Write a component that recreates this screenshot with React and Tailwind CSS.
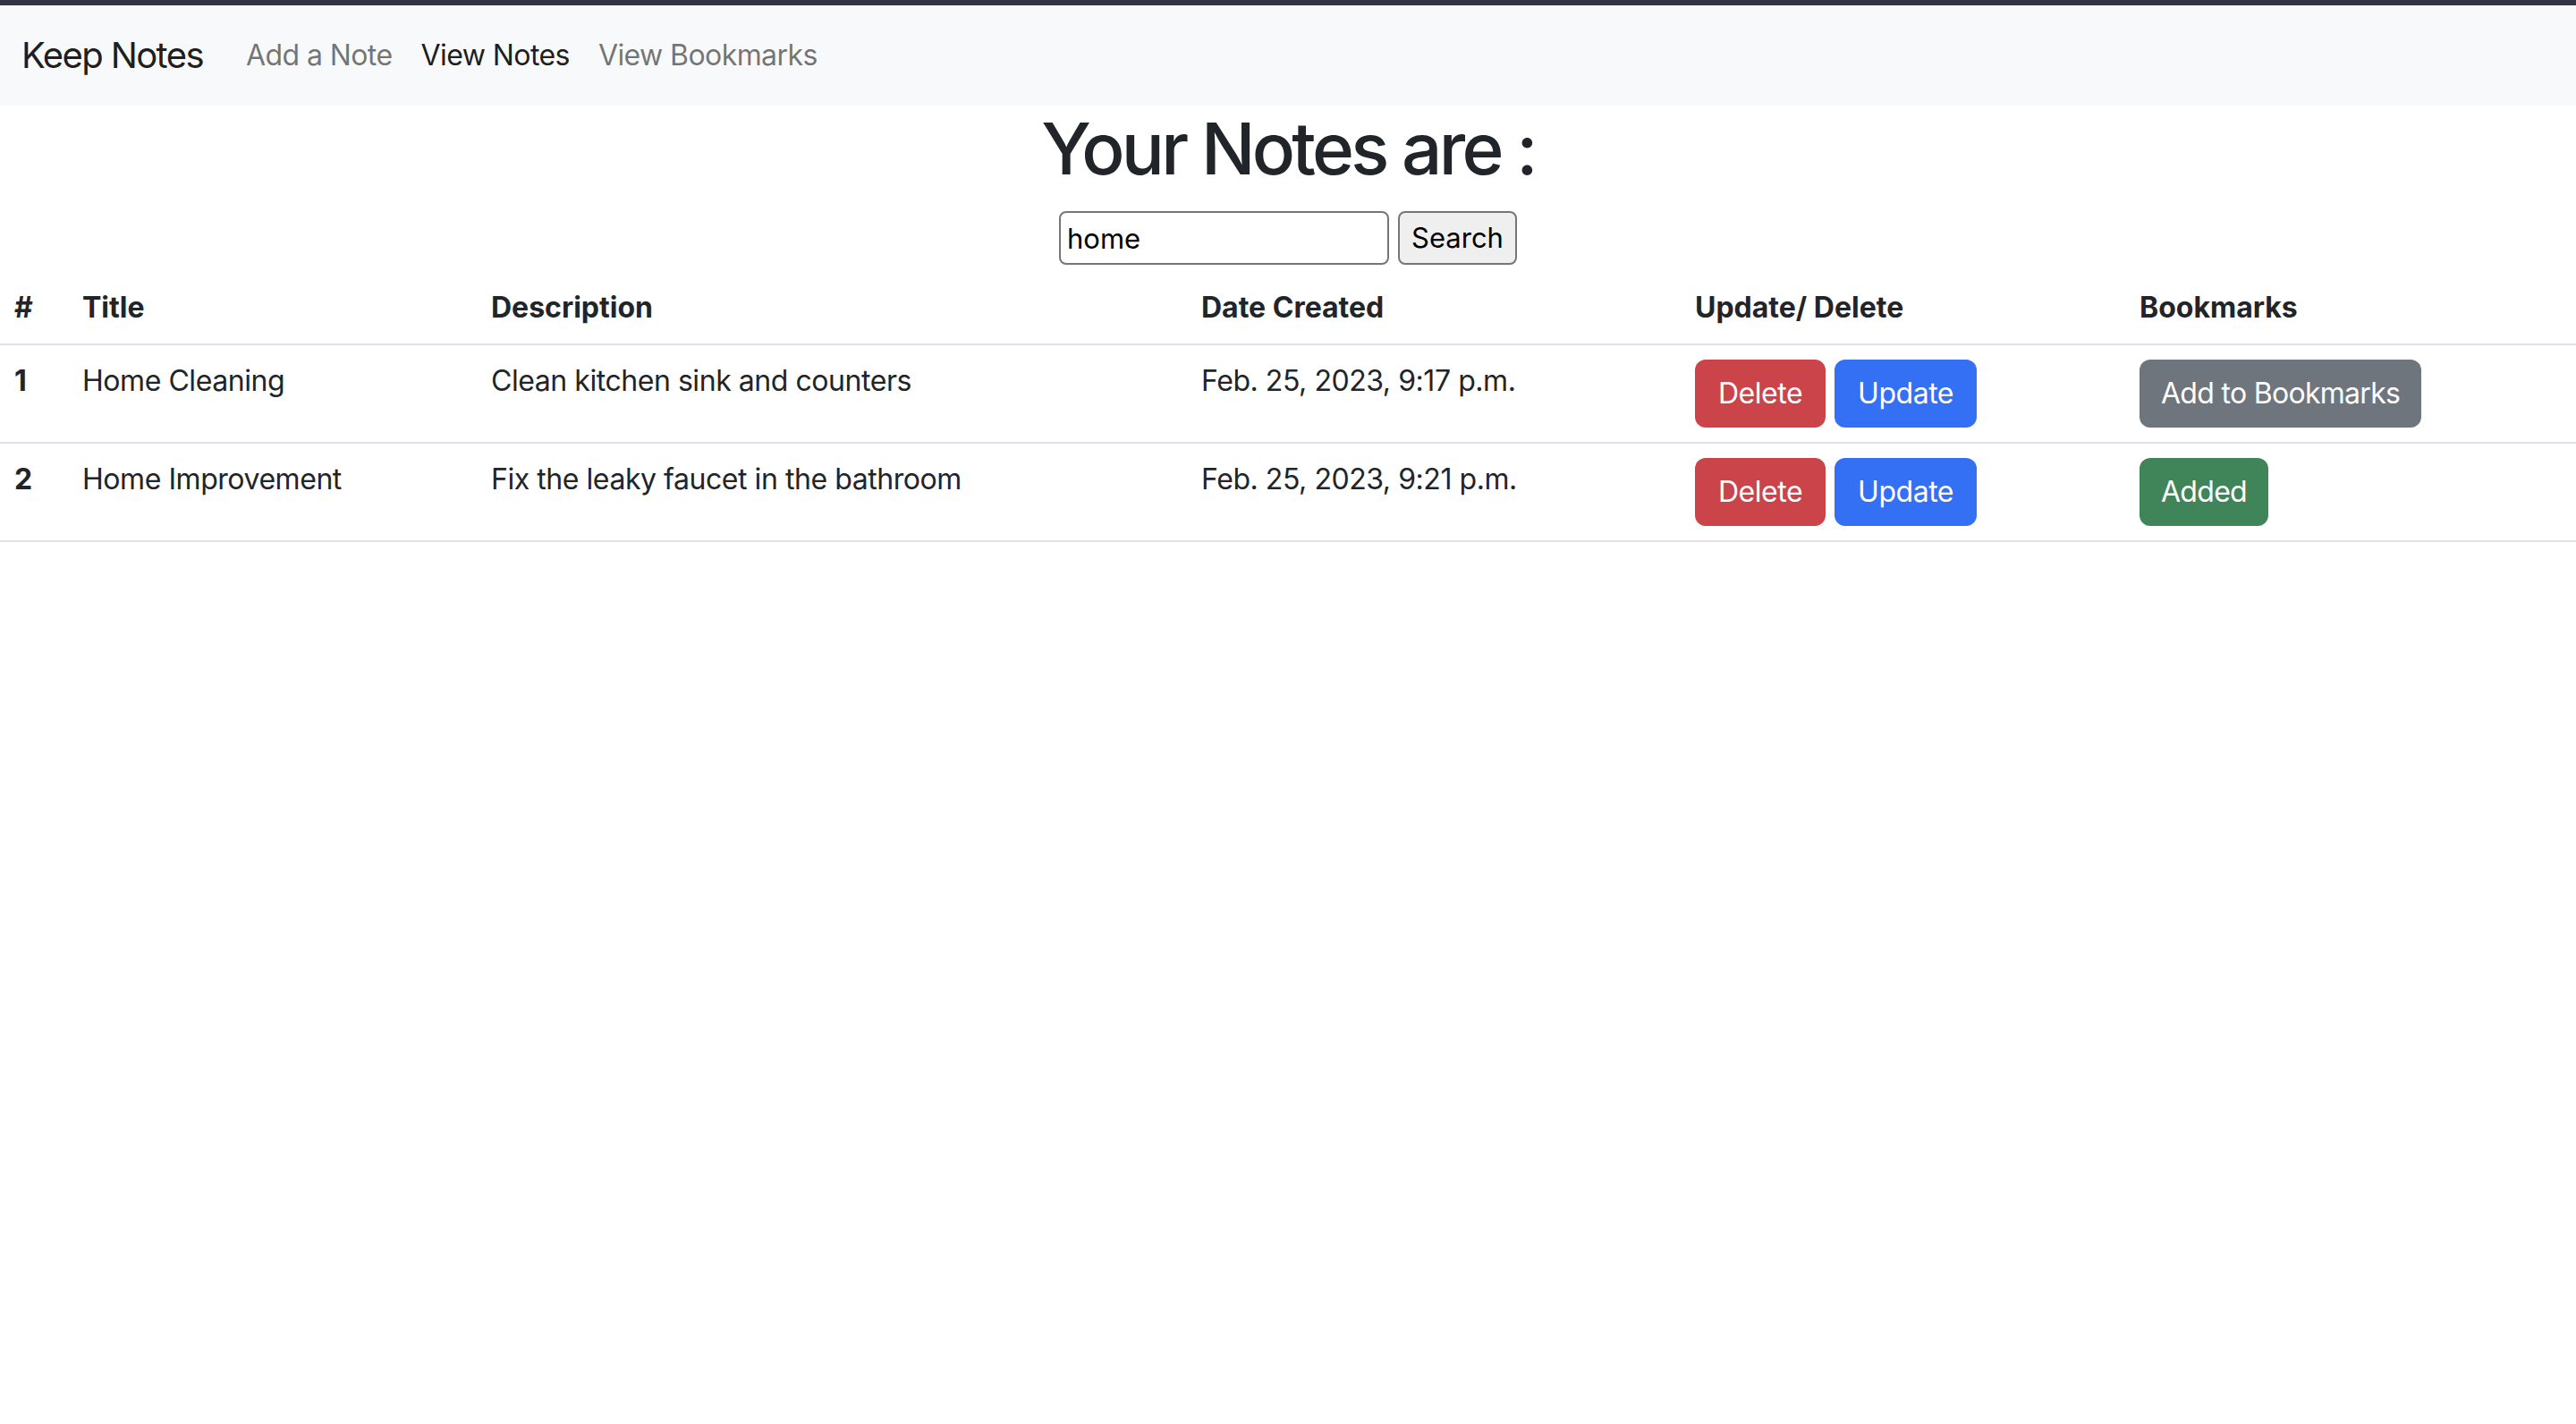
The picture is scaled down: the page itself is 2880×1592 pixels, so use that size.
import { useState } from "react"

const notes = [
  { id: 1, title: "Home Cleaning", description: "Clean kitchen sink and counters", created: "Feb. 25, 2023, 9:17 p.m.", bookmarked: false },
  { id: 2, title: "Home Improvement", description: "Fix the leaky faucet in the bathroom", created: "Feb. 25, 2023, 9:21 p.m.", bookmarked: true },
]

export default function App() {
  const [query, setQuery] = useState("home")

  return (
    <div className="min-h-screen bg-white font-['Inter','Noto_Sans',sans-serif] tracking-[-0.028em] text-[#212529]">
      <div className="h-[6px] bg-[#313443]" />
      <nav className="flex h-[112px] items-center bg-[#f8f9fa] px-[24px] tracking-[-0.036em]">
        <span className="mr-[32px] text-[40px] tracking-[-0.04em] text-black/90">Keep Notes</span>
        <a className="px-[16px] text-[32px] text-black/55">Add a Note</a>
        <a className="px-[16px] text-[32px] text-black/90">View Notes</a>
        <a className="px-[16px] text-[32px] text-black/55">View Bookmarks</a>
      </nav>

      <h1 className="mb-[22px] text-center text-[80px] font-medium leading-[96px] tracking-[-0.047em]">Your Notes are :</h1>

      <form className="flex justify-center gap-[10px] tracking-normal" onSubmit={(e) => e.preventDefault()}>
        <input
          value={query}
          onChange={(e) => setQuery(e.target.value)}
          className="h-[60px] w-[369px] rounded-[8px] border-2 border-[#767676] bg-white px-[7px] text-[31px] text-black outline-none"
        />
        <button className="h-[60px] w-[133px] rounded-[8px] border-2 border-[#767676] bg-[#efefef] text-[31px] text-black">
          Search
        </button>
      </form>

      <table className="mt-[8px] w-full table-fixed border-collapse text-left text-[32px] leading-[48px]">
        <colgroup>
          <col className="w-[76px]" />
          <col className="w-[457px]" />
          <col className="w-[794px]" />
          <col className="w-[552px]" />
          <col className="w-[497px]" />
          <col className="w-[504px]" />
        </colgroup>
        <thead className="tracking-normal">
          <tr className="border-b-2 border-[#dee2e6]">
            <th className="p-[16px] font-bold">#</th>
            <th className="p-[16px] font-bold">Title</th>
            <th className="p-[16px] font-bold">Description</th>
            <th className="p-[16px] font-bold">Date Created</th>
            <th className="p-[16px] font-bold">Update/ Delete</th>
            <th className="p-[16px] font-bold">Bookmarks</th>
          </tr>
        </thead>
        <tbody>
          {notes.map((note) => (
            <tr key={note.id} className="border-b-2 border-[#dee2e6] align-top">
              <th className="p-[16px] font-bold tracking-normal">{note.id}</th>
              <td className="p-[16px]">{note.title}</td>
              <td className="p-[16px]">{note.description}</td>
              <td className="p-[16px]">{note.created}</td>
              <td className="p-[16px]">
                <div className="flex gap-[10px] tracking-[-0.015em]">
                  <button className="h-[76px] rounded-[12px] bg-[#cb444a] px-[26px] text-white">Delete</button>
                  <button className="h-[76px] rounded-[12px] bg-[#3470f3] px-[26px] text-white">Update</button>
                </div>
              </td>
              <td className="p-[16px] tracking-[-0.022em]">
                {note.bookmarked ? (
                  <button className="h-[76px] rounded-[12px] bg-[#40855a] px-[24px] text-white">Added</button>
                ) : (
                  <button className="h-[76px] rounded-[12px] bg-[#6e757c] px-[24px] text-white">Add to Bookmarks</button>
                )}
              </td>
            </tr>
          ))}
        </tbody>
      </table>
    </div>
  )
}
